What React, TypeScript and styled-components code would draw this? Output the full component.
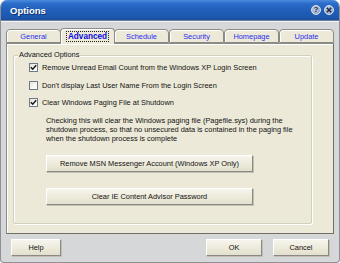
import React from 'react';
import styled, { createGlobalStyle } from 'styled-components';

const GlobalStyle = createGlobalStyle`
  html, body { margin: 0; padding: 0; background: #ffffff; }
  body { font-family: "Liberation Sans", Arial, sans-serif; }
`;

const tabs = ['General', 'Advanced', 'Schedule', 'Security', 'Homepage', 'Update'];

const options = [
  { label: 'Remove Unread Email Count from the Windows XP Login Screen', checked: true },
  { label: "Don't display Last User Name From the Login Screen", checked: false },
  { label: 'Clear Windows Paging File at Shutdown', checked: true },
];

const App = () => {
  const [active, setActive] = React.useState<string>('Advanced');
  const [checks, setChecks] = React.useState<boolean[]>(options.map((o) => o.checked));

  const toggle = (i: number) => {
    setChecks(checks.map((c, idx) => (idx === i ? !c : c)));
  };

  return (
    <>
      <GlobalStyle />
      <Window>
        <TitleBar>
          <Title>Options</Title>
          <TitleButtons>
            <CircleButton>?</CircleButton>
            <CircleButton>
              <svg width="6" height="6" viewBox="0 0 6 6">
                <path d="M0.8 0.8 L5.2 5.2 M5.2 0.8 L0.8 5.2" stroke="#1d2a4a" strokeWidth="1.6" />
              </svg>
            </CircleButton>
          </TitleButtons>
        </TitleBar>
        <Body>
          <TabRow>
            {tabs.map((t) => (
              <Tab key={t} selected={t === active} onClick={() => setActive(t)}>
                <TabLabel selected={t === active}>{t}</TabLabel>
              </Tab>
            ))}
          </TabRow>
          <Panel>
            <GroupBox>
              <Legend>Advanced Options</Legend>
              <CheckList>
                {options.map((o, i) => (
                  <CheckRow key={o.label} onClick={() => toggle(i)}>
                    <Box>
                      {checks[i] && (
                        <svg width="7" height="7" viewBox="0 0 7 7">
                          <path d="M0.8 3.2 L2.7 5.2 L6.2 1.2" stroke="#1a1a1a" strokeWidth="1.5" fill="none" />
                        </svg>
                      )}
                    </Box>
                    <CheckLabel>{o.label}</CheckLabel>
                  </CheckRow>
                ))}
              </CheckList>
              <Description>
                Checking this will clear the Windows paging file (Pagefile.sys) during the
                <br />
                shutdown process, so that no unsecured data is contained in the paging file
                <br />
                when the shutdown process is complete
              </Description>
              <ActionButtons>
                <PanelButton>Remove MSN Messenger Account (Windows XP Only)</PanelButton>
                <PanelButton>Clear IE Content Advisor Password</PanelButton>
              </ActionButtons>
            </GroupBox>
          </Panel>
          <Footer>
            <DialogButton width={50}>Help</DialogButton>
            <Spacer />
            <DialogButton width={56}>OK</DialogButton>
            <DialogButton width={56}>Cancel</DialogButton>
          </Footer>
        </Body>
      </Window>
    </>
  );
};

const Window = styled.div`
  width: 340px;
  height: 263px;
  box-sizing: border-box;
  display: flex;
  flex-direction: column;
  border-radius: 7px 7px 4px 4px;
  overflow: hidden;
  background: #d6d7d9;
  border: 1px solid #8e9096;
  border-top: none;
`;

const TitleBar = styled.div`
  height: 20px;
  flex-shrink: 0;
  display: flex;
  align-items: center;
  padding: 0 6px 0 10px;
  margin: 0 -1px;
  background: linear-gradient(180deg, #4b8ce0 0%, #2a6cc9 18%, #1f5eb8 55%, #1c58ae 85%, #1a4f9e 100%);
  border-bottom: 1px solid #6b7f9e;
`;

const Title = styled.div`
  flex: 1;
  color: #ffffff;
  font-weight: bold;
  font-size: 9.5px;
  text-shadow: 1px 1px 0 #0e3270;
`;

const TitleButtons = styled.div`
  display: flex;
  gap: 3px;
`;

const CircleButton = styled.div`
  width: 10px;
  height: 10px;
  border-radius: 50%;
  box-sizing: border-box;
  border: 1px solid #dfe7f3;
  background: radial-gradient(circle at 40% 35%, #c7d3e6 0%, #96a9c7 70%, #7f93b5 100%);
  display: flex;
  align-items: center;
  justify-content: center;
  color: #1d2a4a;
  font-size: 8px;
  font-weight: bold;
  line-height: 1;
`;

const Body = styled.div`
  flex: 1;
  display: flex;
  flex-direction: column;
  padding: 6px 4px 0 4px;
  border-top: 1px solid #f4f4f4;
`;

const TabRow = styled.div`
  display: flex;
  align-items: flex-end;
  height: 15px;
  padding: 0 1px 0 1px;
  position: relative;
  z-index: 1;
`;

const Tab = styled.div<{ selected: boolean }>`
  flex: 1;
  height: ${(p) => (p.selected ? 16 : 14)}px;
  margin: ${(p) => (p.selected ? '0 -1px -1px -1px' : '0')};
  box-sizing: border-box;
  display: flex;
  align-items: center;
  justify-content: center;
  background: #ece9d8;
  border: 1px solid #8b8b86;
  border-bottom: ${(p) => (p.selected ? 'none' : '1px solid #8b8b86')};
  border-radius: 4px 4px 0 0;
  box-shadow: inset 1px 1px 0 #ffffff;
  cursor: default;
  position: relative;
  z-index: ${(p) => (p.selected ? 2 : 0)};
`;

const TabLabel = styled.span<{ selected: boolean }>`
  color: ${(p) => (p.selected ? '#0a0adf' : '#2b2bf0')};
  font-size: ${(p) => (p.selected ? 8.2 : 7.4)}px;
  font-weight: ${(p) => (p.selected ? 'bold' : 'normal')};
  padding: 0 1px;
  outline: ${(p) => (p.selected ? '1px dotted #222' : 'none')};
  line-height: 9px;
`;

const Panel = styled.div`
  height: 191px;
  box-sizing: border-box;
  margin: 0 1px;
  background: #ece9d8;
  border: 1px solid #8b8b86;
  border-right-color: #6f6f6a;
  border-bottom-color: #6f6f6a;
  box-shadow: inset 1px 1px 0 #ffffff;
  padding: 11px 21px 0 6px;
`;

const GroupBox = styled.div`
  position: relative;
  height: 169px;
  box-sizing: border-box;
  border: 1px solid #d0d0bf;
  box-shadow: inset 1px 1px 0 #ffffff, 1px 1px 0 #ffffff;
  border-radius: 2px;
  padding: 7px 0 0 15px;
`;

const Legend = styled.div`
  position: absolute;
  top: -6px;
  left: 4px;
  padding: 0 1px;
  background: #ece9d8;
  font-size: 7.4px;
  line-height: 10px;
  color: #111;
`;

const CheckList = styled.div`
  display: flex;
  flex-direction: column;
  gap: 8.6px;
`;

const CheckRow = styled.div`
  display: flex;
  align-items: center;
  gap: 4px;
  height: 9px;
  cursor: default;
`;

const Box = styled.div`
  width: 9px;
  height: 9px;
  box-sizing: border-box;
  border: 1px solid #6e7a8a;
  background: linear-gradient(135deg, #e4e3dc 0%, #f7f7f4 60%, #ffffff 100%);
  display: flex;
  align-items: center;
  justify-content: center;
`;

const CheckLabel = styled.span`
  font-size: 7.4px;
  color: #111;
  white-space: nowrap;
`;

const Description = styled.div`
  margin: 9px 0 0 17px;
  font-size: 7.4px;
  line-height: 9px;
  color: #111;
  white-space: nowrap;
`;

const ActionButtons = styled.div`
  margin: 12px 0 0 17px;
  display: flex;
  flex-direction: column;
  gap: 16px;
`;

const PanelButton = styled.button`
  width: 207px;
  height: 17px;
  padding: 0;
  box-sizing: border-box;
  font-family: "Liberation Sans", Arial, sans-serif;
  font-size: 7.4px;
  color: #111;
  background: linear-gradient(180deg, #f6f5ee 0%, #ece9d8 60%, #e2dfcf 100%);
  border: 1px solid #ffffff;
  border-right-color: #8a8a84;
  border-bottom-color: #8a8a84;
  box-shadow: 1px 1px 0 #c2c0b2;
  border-radius: 0;
`;

const Footer = styled.div`
  display: flex;
  align-items: center;
  gap: 11px;
  padding: 5px 6px 0 6px;
`;

const Spacer = styled.div`
  flex: 1;
`;

const DialogButton = styled(PanelButton)<{ width: number }>`
  width: ${(p) => p.width}px;
`;

export default App;
